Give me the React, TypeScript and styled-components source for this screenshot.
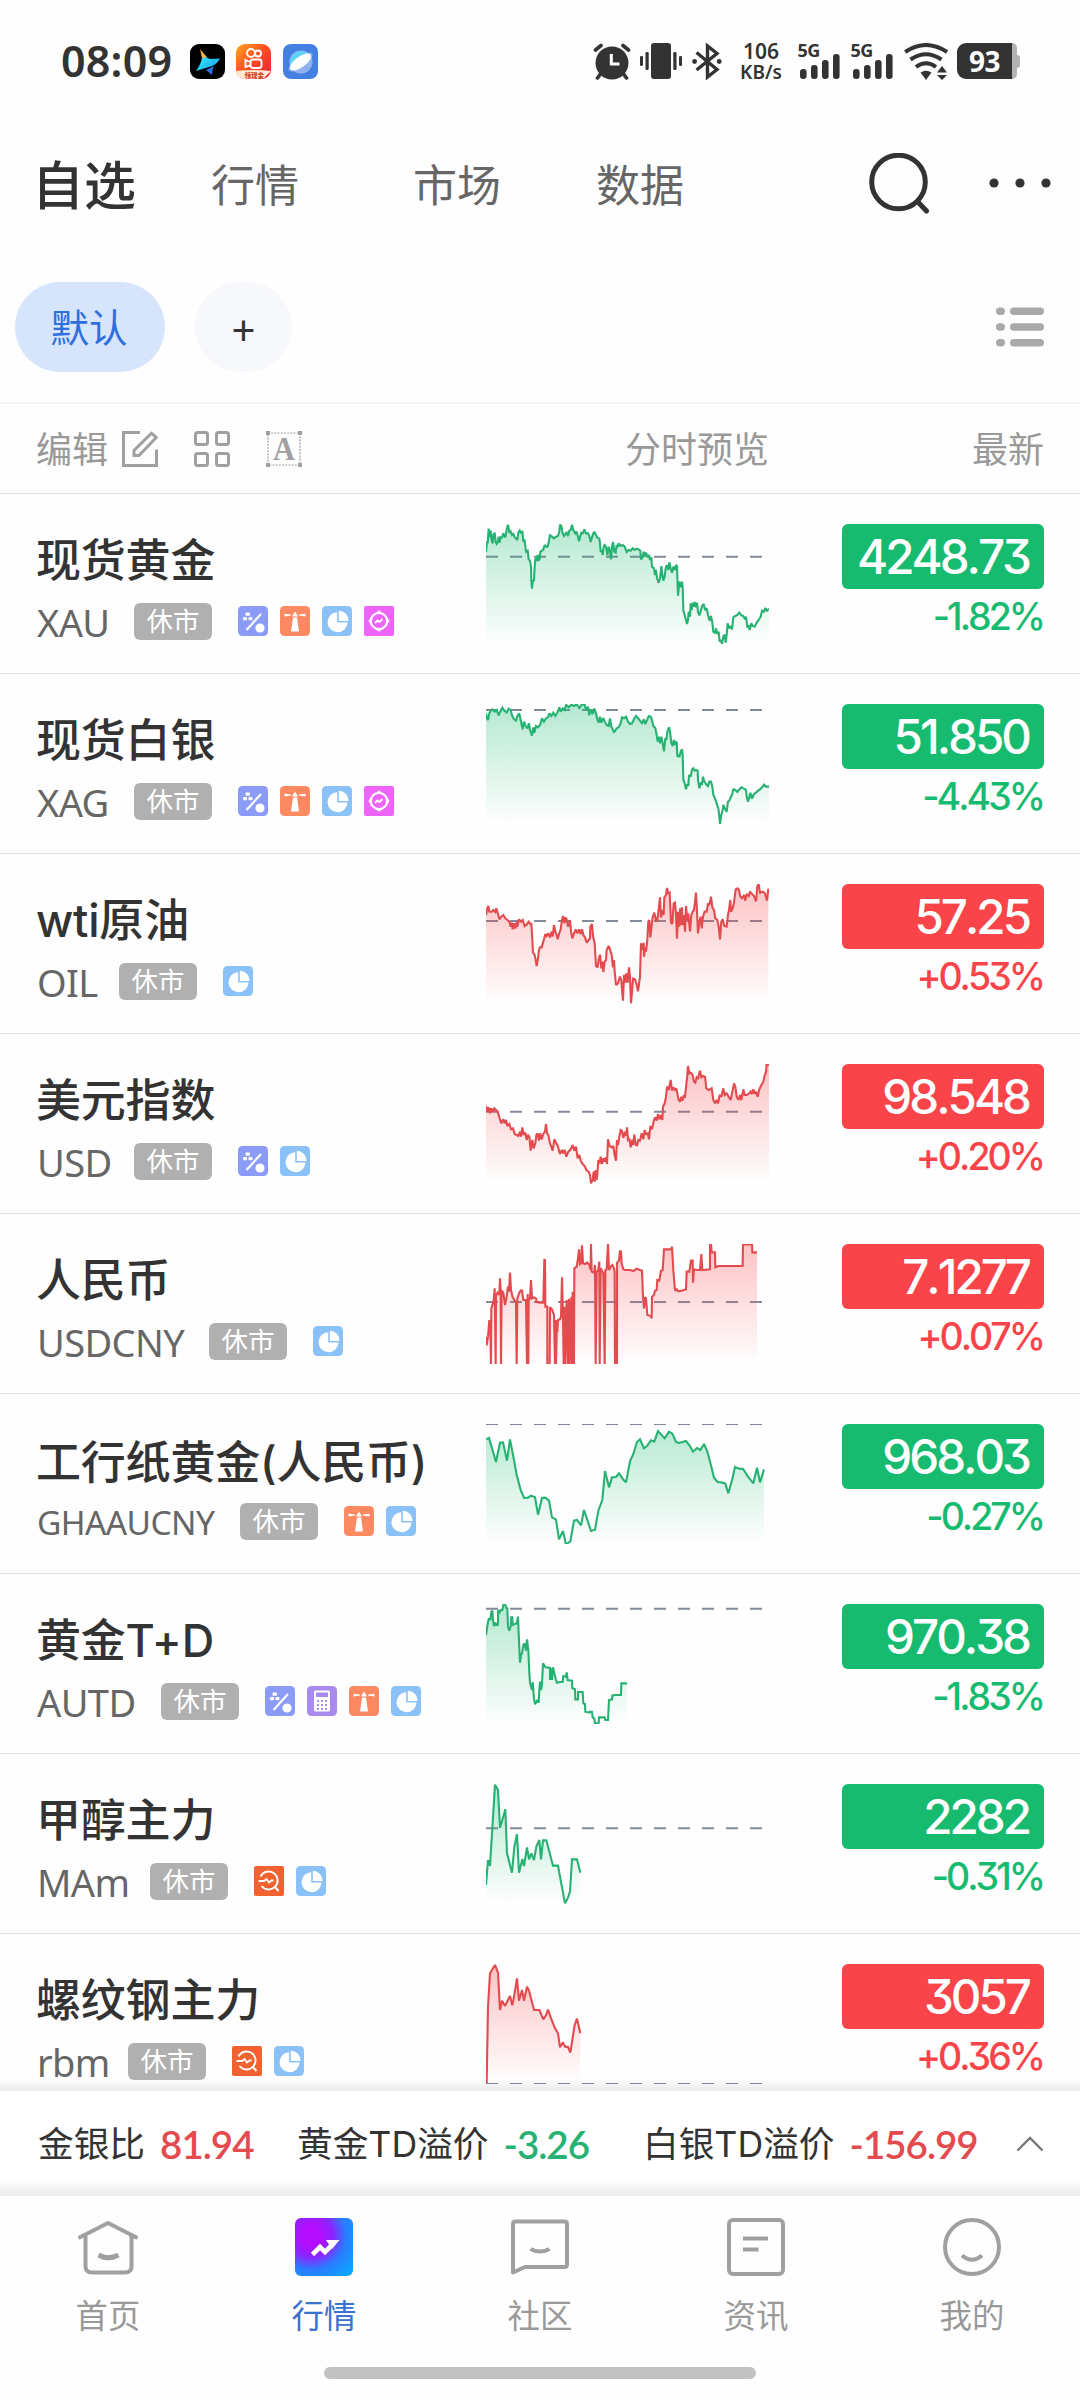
import React from 'react';
import styled, { createGlobalStyle } from 'styled-components';

const GREEN = '#17bb70';
const RED = '#f94449';
const INK = '#333333';
const MUTED = '#999999';

const cjk = `'Noto Sans', 'Noto Sans CJK SC', sans-serif`;
const numeric = `Inter, 'Noto Sans CJK SC', sans-serif`;

const GlobalStyle = createGlobalStyle`
  * { box-sizing: border-box; }
  body { margin: 0; background: #fefefe; }
  svg { display: block; flex: none; }
`;

const Screen = styled.div`
  width: 1080px;
  height: 2400px;
  display: flex;
  flex-direction: column;
  overflow: hidden;
  background: #fefefe;
  color: ${INK};
  font-family: ${cjk};
`;

/* ---------- status bar ---------- */

const StatusBar = styled.header`
  height: 122px;
  padding: 0 60px 0 61px;
  display: flex;
  align-items: center;
  justify-content: space-between;
`;

const StatusGroup = styled.div<{ $gap: number }>`
  display: flex;
  align-items: center;
  gap: ${p => p.$gap}px;
`;

const Clock = styled.span`
  width: 117px;
  font-size: 43px;
  font-weight: 600;
  line-height: 50px;
  letter-spacing: 0.2px;
`;

const NetSpeed = styled.div`
  width: 47px;
  margin: 0 3.5px 0 6.5px;
  display: flex;
  flex-direction: column;
  align-items: center;
  gap: 1px;
  font-weight: 600;
  font-size: 19px;
  line-height: 20px;
  & > span:first-child { font-size: 21px; letter-spacing: 0; }
`;

const Signal = styled.div`
  width: 42px;
  height: 36px;
  margin-right: 1.5px;
  display: grid;
  & > * { grid-area: 1 / 1; }
`;

const SignalLabel = styled.span`
  font-size: 18px;
  font-weight: 700;
  line-height: 14px;
  letter-spacing: -0.5px;
`;

const Battery = styled.div`
  width: 55px;
  height: 36px;
  display: flex;
  align-items: center;
  justify-content: center;
  border-radius: 9px 0 0 9px;
  background: ${INK};
  color: #fff;
  font-weight: 700;
  font-size: 28px;
  line-height: 36px;
  letter-spacing: -0.5px;
`;

const BatteryWrap = styled.div`
  margin-left: -1px;
  display: flex;
  align-items: center;
`;

const BatteryEdge = styled.span`
  width: 5px;
  height: 36px;
  border-radius: 0 7px 7px 0;
  background: #b3b3b3;
`;

const BatteryCap = styled.span`
  width: 3px;
  height: 13px;
  border-radius: 0 3px 3px 0;
  background: #b3b3b3;
`;

/* ---------- top navigation ---------- */

const TopNav = styled.nav`
  height: 126px;
  padding: 0 29px 0 32px;
  display: flex;
  align-items: center;
`;

const TopTab = styled.span<{ $active?: boolean; $width: number }>`
  width: ${p => p.$width}px;
  font-size: ${p => (p.$active ? 52 : 44)}px;
  font-weight: ${p => (p.$active ? 500 : 400)};
  color: ${p => (p.$active ? INK : '#666')};
  line-height: 60px;
`;

const TopActions = styled.div`
  margin: -4px 0 0 auto;
  display: flex;
  align-items: center;
  gap: 60px;
`;

const GroupBar = styled.div`
  height: 156px;
  padding: 34px 36px 0 15px;
  display: flex;
  align-items: flex-start;
  border-bottom: 2px solid #f3f4f6;
`;

const Pill = styled.button<{ $active?: boolean }>`
  width: ${p => (p.$active ? 150 : 97)}px;
  height: 90px;
  margin: 0 30px 0 0;
  padding: ${p => (p.$active ? '0 2px 0 0' : '6px 0 0')};
  border: 0;
  border-radius: 45px;
  background: ${p => (p.$active ? '#d6e4fc' : '#f7f8fb')};
  color: ${p => (p.$active ? '#2f6fdc' : INK)};
  font-family: ${cjk};
  font-size: ${p => (p.$active ? 38.5 : 42)}px;
  line-height: ${p => (p.$active ? 86 : 84)}px;
`;

const ListToggle = styled.div`
  margin: 25px 0 0 auto;
`;

/* ---------- table header ---------- */

const TableHead = styled.div`
  height: 90px;
  padding: 0 36px;
  display: grid;
  grid-template-columns: 450px 283px 1fr;
  align-items: center;
  border-bottom: 1px solid #e3e3e3;
  color: ${MUTED};
  font-size: 36px;
  line-height: 44px;
`;

const HeadTools = styled.div`
  display: flex;
  align-items: center;
  & > span { width: 86px; padding-top: 3px; }
  & > svg { margin-right: 36px; }
`;

const HeadCell = styled.span`
  padding-top: 3px;
  text-align: right;
`;

/* ---------- quote rows ---------- */

const QuoteList = styled.main`
  height: 1597px;
  flex: none;
  overflow: hidden;
  position: relative;
`;

const ListShade = styled.div`
  position: absolute;
  left: 0;
  right: 0;
  bottom: 0;
  height: 12px;
  background: linear-gradient(rgba(0, 0, 0, 0), rgba(0, 0, 0, 0.08));
`;

const Row = styled.section`
  height: 180px;
  padding: 30px 36px 0;
  display: grid;
  grid-template-columns: 450px 283px 1fr;
  align-items: start;
  border-bottom: 1px solid #e3e3e3;
`;

const Info = styled.div`
  display: flex;
  flex-direction: column;
  gap: 6px;
`;

const Name = styled.h2<{ $shift: number }>`
  margin: 0;
  padding-top: ${p => 5 + p.$shift}px;
  height: 71px;
  font-family: ${numeric};
  font-size: 45px;
  font-weight: 500;
  line-height: 64px;
  letter-spacing: -0.2px;
  white-space: nowrap;
`;

const Meta = styled.div`
  height: 40px;
  display: flex;
  align-items: center;
`;

const Code = styled.span<{ $width: number; $small?: boolean }>`
  width: ${p => p.$width}px;
  padding: 2px 0 0 1px;
  color: #666;
  font-size: ${p => (p.$small ? 33.5 : 38)}px;
  line-height: 40px;
  letter-spacing: -0.6px;
  white-space: nowrap;
`;

const Closed = styled.span`
  width: 78px;
  height: 37px;
  margin-right: 26px;
  border-radius: 6px;
  background: #b0b0b0;
  color: #fff;
  font-size: 26.5px;
  line-height: 36px;
  text-align: center;
`;

const Tags = styled.div`
  display: flex;
  gap: 12px;
`;

const Quote = styled.div`
  justify-self: end;
  width: 202px;
  display: flex;
  flex-direction: column;
  align-items: flex-end;
  font-family: ${numeric};
  font-kerning: none;
  font-feature-settings: 'cv09' 1, 'kern' 0, 'calt' 0;
`;

const Price = styled.strong<{ $color: string }>`
  width: 202px;
  height: 65px;
  padding-right: 15px;
  border-radius: 6px;
  background: ${p => p.$color};
  color: #fff;
  font-size: 47.5px;
  font-weight: 500;
  line-height: 65px;
  letter-spacing: -3px;
  text-align: right;
`;

const Change = styled.span<{ $color: string }>`
  margin: 5px 0 0;
  color: ${p => p.$color};
  font-size: 37.5px;
  font-weight: 500;
  line-height: 46px;
  letter-spacing: -3px;
  margin-right: 1px;
`;

/* ---------- summary strip ---------- */

const Summary = styled.div`
  height: 105px;
  flex: none;
  padding: 0 36px 0 38px;
  display: flex;
  align-items: center;
  background: linear-gradient(rgba(0, 0, 0, 0) 89px, rgba(0, 0, 0, 0.08) 105px), #fff;
  font-family: ${numeric};
  font-size: 35.7px;
  line-height: 50px;
  & > svg { margin-left: auto; }
`;

const SummaryItem = styled.span<{ $width: number }>`
  width: ${p => p.$width}px;
  display: flex;
  white-space: nowrap;
`;

const SummaryValue = styled.b<{ $color: string }>`
  margin-left: 15px;
  color: ${p => p.$color};
  font-family: Lato, sans-serif;
  font-size: 38.5px;
  font-weight: 600;
  letter-spacing: -1px;
`;

/* ---------- bottom navigation ---------- */

const BottomNav = styled.nav`
  height: 171px;
  flex: none;
  display: grid;
  grid-template-columns: repeat(5, 1fr);
  justify-items: center;
  padding-top: 20px;
`;

const NavItem = styled.div<{ $active?: boolean }>`
  display: flex;
  flex-direction: column;
  align-items: center;
  gap: 13px;
  color: ${p => (p.$active ? '#3a72d0' : MUTED)};
  font-size: 32.4px;
  line-height: 48px;
`;

const HomeIndicator = styled.div`
  width: 432px;
  height: 12px;
  margin: 0 auto;
  border-radius: 6px;
  background: #c1c1c1;
`;

/* ---------- status icons ---------- */

const AppPlay = () => (
  <svg width="35" height="35" viewBox="0 0 35 35">
    <defs>
      <linearGradient id="play" x1="0" y1="0" x2="1" y2="1">
        <stop offset="0" stopColor="#7ef0e0" />
        <stop offset="0.5" stopColor="#25cdf5" />
        <stop offset="1" stopColor="#1a9be8" />
      </linearGradient>
    </defs>
    <rect width="35" height="35" rx="9" fill="#000" />
    <path d="M11 6.500Q14 13 20 15L30 14.500Q26 22 19 23L6 27Q11 20 12 14Z" fill="url(#play)" />
    <path d="M10 5Q14 10 17 13L12 14Z" fill="#f6b23c" />
    <path d="M16 26L24 22Q22 26 22 31Z" fill="#2b6fe0" />
  </svg>
);

const AppVideo = () => (
  <svg width="35" height="35" viewBox="0 0 35 35">
    <defs>
      <linearGradient id="video" x1="0" y1="0" x2="1" y2="1">
        <stop offset="0" stopColor="#ffa51f" />
        <stop offset="0.5" stopColor="#ff4a22" />
        <stop offset="1" stopColor="#f01b3c" />
      </linearGradient>
      <clipPath id="videoClip"><rect width="35" height="35" rx="9" /></clipPath>
    </defs>
    <g clipPath="url(#videoClip)">
      <rect width="35" height="35" fill="url(#video)" />
      <path d="M0 27Q17 25 35 27L27 35H0Z" fill="#ffe9cf" />
      <g fill="none" stroke="#fff" strokeWidth="1.9">
        <circle cx="15" cy="9" r="4" />
        <circle cx="22" cy="9.500" r="3" />
        <rect x="14.500" y="15.500" width="11" height="8.500" rx="2.500" />
        <path d="M14 18L9.500 16V23L14 21.500" />
      </g>
      <text x="8.500" y="33.500" fontSize="6.500" fontWeight="900" fill="#d8402a" fontFamily="Noto Sans CJK SC">领现金</text>
    </g>
  </svg>
);

const AppPlanet = () => (
  <svg width="35" height="35" viewBox="0 0 35 35">
    <rect width="35" height="35" rx="8" fill="#4380e2" />
    <circle cx="18" cy="18" r="11.500" fill="#8fb2ee" />
    <path d="M7 21A11.500 11.500 0 0 1 27 11L8 24Z" fill="#5fd0f6" />
    <ellipse cx="17.500" cy="18" rx="14.500" ry="5" transform="rotate(-36 17.500 18)" fill="#a9c5f3" opacity="0.6" />
    <ellipse cx="17.500" cy="18" rx="12.500" ry="5.400" transform="rotate(-36 17.500 18)" fill="#fff" />
  </svg>
);

const AlarmIcon = () => (
  <svg width="38" height="37" viewBox="0 0 38 37">
    <g stroke={INK} strokeWidth="3.600" strokeLinecap="round" fill="none">
      <path d="M2.500 7L8 2.500M35.500 7L30 2.500M7.500 31L4.500 35M30.500 31L33.500 35" />
    </g>
    <circle cx="19" cy="20" r="16.500" fill={INK} />
    <path d="M18.300 11V21H26.500" stroke="#fff" strokeWidth="3" fill="none" />
  </svg>
);

const VibrateIcon = () => (
  <svg width="42" height="36" viewBox="0 0 42 36" fill={INK}>
    <rect x="11" y="0" width="20" height="36" rx="3" />
    <rect x="0" y="13" width="3" height="10" rx="1.200" />
    <rect x="5.500" y="9" width="3.200" height="18" rx="1.200" />
    <rect x="33.300" y="9" width="3.200" height="18" rx="1.200" />
    <rect x="39" y="13" width="3" height="10" rx="1.200" />
  </svg>
);

const BluetoothIcon = () => (
  <svg width="30" height="37" viewBox="0 0 30 37">
    <path d="M4.500 9.500L25 26.500L15.500 34V3L25 10.500L4.500 27" fill="none" stroke={INK} strokeWidth="3.400" />
    <circle cx="2.600" cy="18.500" r="2.400" fill={INK} />
    <circle cx="27.200" cy="18.500" r="2.400" fill={INK} />
  </svg>
);

const SignalBars = () => (
  <svg width="42" height="36" viewBox="0 0 42 36" fill={INK}>
    <rect x="2" y="26" width="6.600" height="10" rx="3" />
    <rect x="13" y="22" width="6.600" height="14" rx="3" />
    <rect x="24" y="17" width="6.600" height="19" rx="3" />
    <rect x="35" y="11" width="6.600" height="25" rx="3" />
  </svg>
);

const WifiIcon = () => (
  <svg width="45" height="37" viewBox="0 0 45 37">
    <g fill="none" stroke={INK} strokeWidth="4">
      <path d="M1.200 9Q22 -5 43 9" />
      <path d="M6.500 16.500Q22 6 37.500 16.500" />
      <path d="M12 24Q22 16.500 32 24" />
    </g>
    <path d="M16.500 29.500Q22 26 27.500 29.500L22 37Z" fill={INK} />
    <path d="M33 29.500L38 23L43 29.500ZM33 32L38 37L43 32Z" fill={INK} />
  </svg>
);

/* ---------- toolbar icons ---------- */

const SearchIcon = () => (
  <svg width="60" height="61" viewBox="0 0 60 61" fill="none" stroke={INK}>
    <circle cx="29.500" cy="29" r="26.800" strokeWidth="5" />
    <path d="M48.500 48.500L57.500 58" strokeWidth="5" strokeLinecap="round" />
  </svg>
);

const MoreIcon = () => (
  <svg width="62" height="12" viewBox="0 0 62 12" fill={INK}>
    <circle cx="5" cy="6" r="4.600" />
    <circle cx="31" cy="6" r="4.600" />
    <circle cx="57" cy="6" r="4.600" />
  </svg>
);

const ListIcon = () => (
  <svg width="48" height="40" viewBox="0 0 48 40" fill="#a9a9a9">
    {[0.5, 16.2, 32].map(y => (
      <React.Fragment key={y}>
        <rect x="0" y={y} width="9" height="7.500" rx="3.700" />
        <rect x="14" y={y} width="34" height="7.500" rx="3.700" />
      </React.Fragment>
    ))}
  </svg>
);

const EditIcon = () => (
  <svg width="36" height="36" viewBox="0 0 36 36" fill="none" stroke="#a0a0a0" strokeWidth="3">
    <path d="M18 1.500H1.500V34.500H34.500V18.500" />
    <path d="M12 24.500V19.500L29.500 2.200L34.200 6.500L17 24.500Z" />
  </svg>
);

const GridIcon = () => (
  <svg width="36" height="36" viewBox="0 0 36 36" fill="none" stroke="#a0a0a0" strokeWidth="3">
    <rect x="1.500" y="1.500" width="12" height="12" rx="2" />
    <rect x="22.500" y="1.500" width="12" height="12" rx="2" />
    <rect x="1.500" y="22.500" width="12" height="12" rx="2" />
    <rect x="22.500" y="22.500" width="12" height="12" rx="2" />
  </svg>
);

const FontSizeIcon = () => (
  <svg width="36" height="36" viewBox="0 0 36 36">
    <rect x="2" y="2" width="32" height="32" fill="none" stroke="#a0a0a0" strokeWidth="1.200" strokeDasharray="2 1.200" />
    <path d="M0 0H4V4H0ZM32 0H36V4H32ZM0 32H4V36H0ZM32 32H36V36H32Z" fill="#a0a0a0" />
    <text x="18" y="29" textAnchor="middle" fontFamily="Liberation Serif, serif" fontWeight="700" fontSize="34" fill="#a0a0a0" textLength="22" lengthAdjust="spacingAndGlyphs">A</text>
  </svg>
);

const ChevronUp = () => (
  <svg width="28" height="17" viewBox="0 0 28 17">
    <path d="M1.500 15.500L14 3L26.500 15.500" fill="none" stroke="#777" strokeWidth="2.400" />
  </svg>
);

/* ---------- row tags ---------- */

type TagKind = 'ratio' | 'tower' | 'pie' | 'target' | 'calc' | 'scan';

const tagColors: Record<TagKind, string> = {
  ratio: '#8a9cf8',
  tower: '#fb8a63',
  pie: '#8ac2f8',
  target: '#ee63f8',
  calc: '#a98bf0',
  scan: '#f0622f',
};

const tagShapes: Record<TagKind, React.ReactNode> = {
  ratio: (
    <g fill="#fff">
      <path d="M8.500 24L23 8" stroke="#fff" strokeWidth="2.200" />
      <circle cx="22" cy="22" r="4.600" />
      <rect x="7.500" y="6.500" width="4.500" height="3.200" rx="1" />
      <rect x="5" y="11" width="4" height="3.200" rx="1" />
      <rect x="10.500" y="11" width="4" height="3.200" rx="1" />
    </g>
  ),
  tower: (
    <g fill="#fff">
      <path d="M13 11.500H17L19 25.500H11Z" />
      <path d="M12 10.500L15 5.500L18 10.500Z" />
      <path d="M4.500 7.800L11 8.600V9.600L4.500 10.400ZM25.500 7.800L19 8.600V9.600L25.500 10.400Z" />
    </g>
  ),
  pie: (
    <g fill="#fff">
      <path d="M15.200 6.200A10 10 0 1 0 25.500 16.500H15.200Z" />
      <path d="M16.800 4.800A9.800 9.800 0 0 1 26.500 15H16.800Z" />
    </g>
  ),
  target: (
    <g fill="none" stroke="#fff" strokeWidth="2.200">
      <circle cx="15" cy="15" r="8.200" />
      <path d="M15 4.800V8M15 22V25.200M4.800 15H8M22 15H25.200" strokeWidth="3" />
      <path d="M11 17L13.500 14.500L15.500 16L18.500 13" strokeWidth="1.800" />
    </g>
  ),
  calc: (
    <g>
      <rect x="7" y="4.500" width="16" height="21" rx="1.500" fill="#fff" />
      <rect x="9" y="6.500" width="12" height="4.500" fill="#a98bf0" />
      {[14, 18, 22].map(y => [10, 14, 18].map(x => (
        <rect key={`${x}-${y}`} x={x} y={y} width="2" height="2" fill="#a98bf0" />
      )))}
    </g>
  ),
  scan: (
    <g fill="none" stroke="#fff" strokeWidth="1.900">
      <path d="M6.500 10.500A9 9 0 1 1 7.500 20" />
      <path d="M21 21L24.500 25" />
      <path d="M4.500 15H10L12.500 13L15 16.500L17.500 14.500H19.500" />
    </g>
  ),
};

const TagIcon = ({ kind }: { kind: TagKind }) => (
  <svg width="30" height="30" viewBox="0 0 30 30">
    <rect width="30" height="30" rx={kind === 'target' || kind === 'scan' ? 2 : 4.5} fill={tagColors[kind]} />
    {tagShapes[kind]}
  </svg>
);

/* ---------- sparklines: three units to a pixel, 849 x 360 from (78, 72) ---------- */

const Sparkline = ({ id, points, base, color }: { id: string; points: string; base: number; color: string }) => {
  const list = points.trim().split(/\s+/);
  const firstX = list[0].split(',')[0];
  const lastX = list[list.length - 1].split(',')[0];
  const stroke = color === RED ? '#e34b4e' : '#27b273';
  return (
    <svg width="283" height="120" viewBox="78 72 849 360">
      <defs>
        <linearGradient id={`fill-${id}`} gradientUnits="userSpaceOnUse" x1="0" y1="72" x2="0" y2="432">
          <stop offset="0" stopColor={color} stopOpacity="0.32" />
          <stop offset="1" stopColor={color} stopOpacity="0" />
        </linearGradient>
      </defs>
      <path d={`M78 ${base}H912`} stroke="#838a9b" strokeWidth="6" strokeDasharray="36 36" />
      <polygon points={`${firstX},432 ${points} ${lastX},432`} fill={`url(#fill-${id})`} />
      <polyline points={points} fill="none" stroke={stroke} strokeWidth="6.300" strokeLinejoin="miter" strokeMiterlimit="2" />
    </svg>
  );
};

interface Instrument {
  name: string;
  code: string;
  codeWidth: number;
  small?: boolean;
  tags: TagKind[];
  price: string;
  change: string;
  up: boolean;
  base: number;
  points: string;
}

const instruments: Instrument[] = [
  {
    name: '现货黄金', code: 'XAU', codeWidth: 98, tags: ['ratio', 'tower', 'pie', 'target'],
    price: '4248.73', change: '-1.82%', up: false, base: 170,
    points: `78,155 81,125 83,130 86,86 89,112 92,92 95,120 98,130 100,105 104,98 107,125 110,132 113,128 116,110 119,128 122,112 126,112 130,100 133,108 136,112 140,90 144,74 148,98 152,94 156,105 160,102 164,112 168,115 172,120 175,98 179,92 183,100 187,93 190,125 194,122 198,155 203,152 206,178 210,182 213,200 214,240 216,266 218,245 222,240 224,200 226,178 230,180 233,165 236,180 239,178 241,155 246,152 250,148 254,135 258,140 263,140 267,122 270,106 276,110 282,115 288,110 294,108 298,95 300,74 304,78 308,100 312,108 316,102 320,98 324,108 328,92 332,90 336,74 340,90 346,100 350,95 354,110 357,124 360,112 364,98 368,100 373,88 378,100 384,100 388,108 392,126 396,112 400,100 403,95 408,105 412,113 418,116 420,130 422,156 426,150 428,165 431,140 434,135 438,140 442,165 446,140 450,155 453,178 456,140 459,126 463,155 467,158 470,135 473,142 476,130 482,138 488,135 494,140 500,156 506,150 512,152 518,145 524,150 530,146 536,148 541,152 543,178 548,172 551,155 554,170 558,158 563,172 567,165 570,180 574,172 576,200 582,205 585,225 588,210 591,235 596,248 600,235 604,198 607,225 610,242 614,230 617,205 621,195 625,210 628,187 632,205 636,218 640,200 644,210 648,195 651,198 654,287 658,245 662,262 666,245 668,262 670,330 674,345 678,360 681,372 684,360 686,335 690,350 692,310 695,330 698,308 702,320 704,306 708,322 711,308 714,335 718,346 722,335 726,318 731,312 735,330 740,325 744,345 749,362 753,348 757,368 760,395 765,400 768,385 772,402 776,395 779,425 783,420 786,432 790,410 794,404 797,428 800,405 803,370 807,385 812,378 816,388 820,352 826,348 832,345 838,338 844,346 850,348 855,358 858,350 862,380 866,378 869,390 874,370 878,378 884,380 890,368 896,360 902,350 906,332 912,335 916,324 921,332 927,326`,
  },
  {
    name: '现货白银', code: 'XAG', codeWidth: 98, tags: ['ratio', 'tower', 'pie', 'target'],
    price: '51.850', change: '-4.43%', up: false, base: 90,
    points: `78,100 81,115 84,120 88,100 92,92 97,88 104,95 110,90 116,106 120,96 127,83 133,92 140,98 146,86 152,90 156,106 162,118 168,122 172,108 178,100 182,120 188,148 192,125 197,138 202,145 207,130 210,150 216,167 220,142 223,158 228,138 234,142 240,135 246,115 252,125 258,115 264,112 268,100 274,108 280,98 286,108 292,98 298,82 302,95 308,85 314,90 318,74 326,82 334,74 342,78 350,73 358,84 366,73 374,74 378,90 384,80 388,106 392,88 398,102 403,86 408,100 412,118 416,128 420,110 424,128 430,114 434,125 440,135 446,138 450,115 454,140 458,148 462,156 466,152 470,145 476,142 482,130 486,112 492,115 498,110 504,125 510,132 516,130 522,118 528,108 534,114 540,122 546,130 552,118 556,132 562,118 566,108 572,110 576,120 580,138 586,144 590,165 593,185 596,170 600,190 604,170 608,190 612,214 616,175 619,180 622,155 627,142 630,155 634,188 638,198 642,180 646,195 650,185 652,230 656,225 658,232 662,215 666,208 668,225 670,300 674,310 678,328 682,312 685,318 687,285 692,290 696,270 700,265 704,272 708,270 713,272 714,300 718,325 722,310 726,312 729,290 733,305 738,312 744,318 748,305 753,305 757,320 760,345 765,355 770,370 775,385 777,400 780,432 784,405 788,390 790,375 796,388 800,395 804,365 808,362 813,350 817,342 820,328 826,330 832,336 838,328 845,322 852,326 858,330 860,350 864,365 868,350 871,338 876,356 882,342 888,338 894,332 900,328 906,322 912,314 918,320 927,320`,
  },
  {
    name: 'wti原油', code: 'OIL', codeWidth: 83, tags: ['pie'],
    price: '57.25', change: '+0.53%', up: true, base: 183,
    points: `78,165 82,145 85,138 88,155 94,156 100,150 106,156 109,145 114,162 118,178 124,170 130,165 136,175 142,180 148,185 152,200 156,188 158,208 162,190 166,206 170,185 172,200 177,178 183,185 188,180 194,198 200,194 206,185 211,192 214,190 217,240 219,278 224,285 228,305 230,318 234,295 237,270 240,262 245,262 250,245 256,222 260,228 265,220 270,232 275,215 278,230 282,195 286,215 290,225 293,238 297,222 302,208 306,180 309,168 313,190 316,172 320,178 324,200 328,190 330,180 333,215 337,235 342,220 347,208 352,220 357,208 362,222 366,208 370,225 375,232 380,248 386,240 390,235 391,200 396,192 399,228 404,250 408,318 413,322 416,298 420,284 424,325 427,305 430,336 434,305 438,300 440,270 446,258 450,268 455,285 459,322 462,300 464,335 468,375 474,370 480,350 484,362 489,422 492,345 496,368 499,340 503,368 507,322 510,350 513,430 517,385 519,356 525,358 530,375 534,394 537,372 540,350 543,250 548,270 551,248 552,290 556,262 558,275 562,240 565,185 568,180 571,232 574,205 578,172 583,158 588,182 592,180 596,150 600,112 603,172 608,150 611,165 613,112 618,105 621,84 625,100 629,98 633,188 637,192 641,130 645,128 648,160 651,236 654,155 658,200 660,145 663,195 666,142 668,196 672,165 675,215 678,138 682,180 685,160 687,185 690,214 694,165 698,155 702,150 705,125 708,98 711,155 714,220 718,185 722,170 725,205 729,170 734,155 740,155 744,130 748,135 753,110 757,142 762,150 766,175 772,180 776,200 780,238 784,185 788,178 793,198 800,200 804,165 807,150 811,120 813,155 818,145 822,128 827,88 833,85 837,90 840,108 846,115 852,105 856,122 860,102 866,108 870,95 876,102 882,108 888,124 892,78 896,72 900,98 908,95 915,100 921,122 925,86`,
  },
  {
    name: '美元指数', code: 'USD', codeWidth: 98, tags: ['ratio', 'pie'],
    price: '98.548', change: '+0.20%', up: true, base: 215,
    points: `78,198 82,215 86,202 90,220 94,205 98,216 103,205 108,210 113,215 118,232 124,250 130,238 134,250 138,240 142,258 148,252 153,268 159,265 164,282 170,285 175,288 180,275 183,290 187,262 191,285 196,278 200,300 204,285 208,290 212,332 217,300 221,325 226,310 229,285 233,280 237,302 241,280 245,298 250,282 255,275 258,252 261,280 265,285 270,310 274,320 278,332 283,298 288,308 294,320 300,342 306,330 310,340 314,330 319,350 325,335 332,328 338,315 343,332 348,320 353,355 358,345 362,362 368,372 374,378 379,390 386,395 390,405 393,430 398,420 401,395 404,425 407,390 410,420 413,390 415,360 419,370 422,350 426,372 430,355 434,365 438,352 441,372 444,298 449,318 455,322 460,318 464,345 468,362 471,300 474,315 478,290 482,270 486,272 490,294 495,275 498,288 501,262 504,300 508,298 512,322 516,300 519,315 523,284 527,315 531,316 535,300 540,302 545,280 550,298 554,270 558,282 563,280 567,298 571,258 576,268 582,240 586,232 590,242 594,222 598,238 603,225 607,240 609,200 614,190 618,170 621,140 626,150 632,120 636,152 640,142 645,150 649,145 652,160 656,180 660,185 664,170 667,182 671,168 675,170 678,142 681,115 684,78 688,100 692,98 697,102 702,125 706,128 710,112 714,115 720,92 724,112 729,108 735,110 739,145 745,150 750,148 755,145 760,180 765,190 770,180 774,190 779,165 784,170 790,145 794,165 800,160 806,170 812,180 816,160 822,130 826,140 830,170 836,180 840,165 844,180 850,148 854,165 860,165 866,162 872,155 876,162 880,148 884,162 888,155 893,170 898,148 904,135 910,125 913,110 918,95 920,72 927,75`,
  },
  {
    name: '人民币', code: 'USDCNY', codeWidth: 173, tags: ['pie'],
    price: '7.1277', change: '+0.07%', up: true, base: 246,
    points: `78,350 80,376 84,350 88,300 91,330 93,432 94,265 100,245 102,232 104,205 107,432 108,228 114,215 118,225 120,175 122,210 123,432 125,212 130,218 135,255 140,230 144,200 147,215 150,158 153,210 158,232 163,240 168,248 170,432 172,235 178,218 182,212 186,212 190,240 198,240 201,432 203,222 205,432 206,240 210,235 213,180 216,235 222,232 228,235 230,246 240,248 250,248 253,120 255,120 256,260 262,260 262,432 269,432 270,262 276,268 282,285 285,432 288,300 288,432 291,300 292,335 294,300 300,298 303,290 306,172 309,290 311,432 314,260 316,432 320,240 324,432 327,236 329,432 334,230 336,432 338,215 340,432 342,432 343,145 350,140 354,115 357,88 360,132 363,130 366,76 369,130 375,132 382,128 388,135 392,150 393,72 395,155 402,158 405,135 407,432 410,155 415,150 418,125 419,432 422,145 430,160 434,432 436,150 440,148 444,72 447,150 452,140 457,135 462,145 464,155 465,432 471,432 471,128 477,122 480,92 483,95 485,130 490,148 495,150 510,150 520,153 530,146 545,152 546,152 549,228 552,265 555,232 558,235 562,285 572,288 575,295 576,230 582,225 585,212 590,210 592,180 598,182 603,152 608,150 612,88 634,88 636,80 640,150 645,212 650,208 655,214 665,212 678,208 680,155 688,155 693,122 698,122 699,188 702,148 710,150 720,150 724,102 727,150 750,148 750,72 753,72 755,97 765,97 766,142 775,138 848,138 849,73 876,73 877,97 891,97`,
  },
  {
    name: '工行纸黄金(人民币)', code: 'GHAAUCNY', codeWidth: 204, small: true, tags: ['tower', 'pie'],
    price: '968.03', change: '-0.27%', up: false, base: 72,
    points: `78,118 87,114 108,186 120,128 129,127 141,182 150,118 162,180 170,225 182,270 192,294 204,293 213,287 225,292 234,344 246,294 256,293 267,302 276,352 288,359 297,418 309,393 317,430 324,429 331,424 342,362 351,360 363,376 372,330 393,393 405,389 415,332 427,300 435,213 447,262 456,232 468,231 477,220 489,238 498,247 510,184 520,162 531,126 540,118 552,145 561,138 573,121 583,125 594,93 614,115 627,95 637,101 648,126 657,129 678,123 690,138 699,155 711,144 721,150 732,132 742,154 754,200 762,233 773,246 784,247 796,251 805,280 817,237 825,201 837,206 849,207 864,230 880,250 891,203 900,247 912,208`,
  },
  {
    name: '黄金T+D', code: 'AUTD', codeWidth: 125, tags: ['ratio', 'calc', 'tower', 'pie'],
    price: '970.38', change: '-1.83%', up: false, base: 86,
    points: `78,165 84,125 87,115 91,120 94,95 97,92 99,120 102,138 106,128 109,135 114,134 114,90 118,100 122,90 127,90 130,75 136,74 139,84 142,85 144,140 148,152 152,138 154,112 157,112 158,135 170,130 174,110 176,160 180,248 183,225 186,220 190,195 194,190 198,212 201,178 205,210 208,280 210,308 216,330 218,306 222,355 225,372 228,368 232,360 236,368 238,330 240,305 243,330 246,312 249,250 257,262 270,264 270,300 273,265 276,300 279,262 282,275 288,300 291,308 300,306 308,306 310,288 318,290 320,277 323,300 336,302 337,325 345,328 346,358 354,358 354,336 368,336 370,370 375,372 376,395 388,398 390,395 396,396 398,412 403,416 405,430 416,430 417,412 434,412 436,420 444,420 447,360 456,358 457,347 465,345 483,345 484,310 501,310`,
  },
  {
    name: '甲醇主力', code: 'MAm', codeWidth: 114, tags: ['scan', 'pie'],
    price: '2282', change: '-0.31%', up: false, base: 205,
    points: `78,375 84,300 90,318 105,74 114,90 120,203 127,180 136,148 141,280 150,315 156,338 163,260 171,223 177,338 187,297 192,318 201,262 207,298 214,280 222,300 229,260 238,240 243,298 249,241 259,241 279,317 294,317 300,350 315,430 324,413 330,395 336,298 351,298 361,338`,
  },
  {
    name: '螺纹钢主力', code: 'rbm', codeWidth: 92, tags: ['scan', 'pie'],
    price: '3057', change: '+0.36%', up: true, base: 432,
    points: `80,430 84,200 90,100 105,75 114,98 120,210 126,182 135,198 150,168 157,196 163,165 171,115 177,182 186,150 192,182 201,140 207,152 222,210 238,210 250,238 258,226 264,209 272,232 285,265 294,280 300,322 309,307 315,320 324,321 331,338 337,300 344,255 351,236 361,280`,
  },
];

/* ---------- bottom navigation icons ---------- */

const NavIcon = ({ children }: { children: React.ReactNode }) => (
  <svg width="62" height="62" viewBox="0 0 62 62" fill="none" stroke="#a0a0a0" strokeWidth="4">{children}</svg>
);

const HomeIcon = () => (
  <NavIcon>
    <path d="M1.500 22L31 7L60.500 22" strokeLinejoin="round" />
    <path d="M8.500 20V50Q8.500 56.500 15 56.500H48Q54.500 56.500 54.500 50V20" />
    <path d="M21.500 39Q31 44.500 41.500 39" strokeWidth="5" />
  </NavIcon>
);

const MarketIcon = () => (
  <NavIcon>
    <defs>
      <radialGradient id="market" cx="0.28" cy="0.3" r="0.95">
        <stop offset="0.18" stopColor="#b30cff" />
        <stop offset="0.4" stopColor="#8a26ff" />
        <stop offset="0.62" stopColor="#2a7bff" />
        <stop offset="1" stopColor="#08aaff" />
      </radialGradient>
    </defs>
    <rect x="2" y="2" width="58" height="58" rx="6" fill="url(#market)" stroke="none" />
    <path d="M19.500 38.500L27 31L32 36L41 27" stroke="#fff" strokeWidth="4.600" />
    <path d="M33 24H46.500L39 33Z" fill="#fff" stroke="none" />
  </NavIcon>
);

const CommunityIcon = () => (
  <NavIcon>
    <path d="M4 8Q4 5.500 6.500 5.500H55.500Q58 5.500 58 8V48.500Q58 51 55.500 51H16L4 56.500Z" strokeLinejoin="round" />
    <path d="M21.500 33Q31 38 40.500 33" />
  </NavIcon>
);

const NewsIcon = () => (
  <NavIcon>
    <rect x="4" y="4" width="54" height="54" rx="4" />
    <path d="M18 22.500H43M18 33.500H33.500" />
  </NavIcon>
);

const MeIcon = () => (
  <NavIcon>
    <circle cx="31" cy="31" r="27" />
    <path d="M21 39.500Q31 48 41 39.500" />
  </NavIcon>
);

const navItems = [
  { label: '首页', Icon: HomeIcon },
  { label: '行情', Icon: MarketIcon, active: true },
  { label: '社区', Icon: CommunityIcon },
  { label: '资讯', Icon: NewsIcon },
  { label: '我的', Icon: MeIcon },
];

export default function App() {
  return (
    <Screen>
      <GlobalStyle />
      <StatusBar>
        <StatusGroup $gap={11.5}>
          <Clock>08:09</Clock>
          <AppPlay />
          <AppVideo />
          <AppPlanet />
        </StatusGroup>
        <StatusGroup $gap={9.5}>
          <AlarmIcon />
          <VibrateIcon />
          <BluetoothIcon />
          <NetSpeed><span>106</span><span>KB/s</span></NetSpeed>
          <Signal><SignalLabel>5G</SignalLabel><SignalBars /></Signal>
          <Signal><SignalLabel>5G</SignalLabel><SignalBars /></Signal>
          <WifiIcon />
          <BatteryWrap><Battery>93</Battery><BatteryEdge /><BatteryCap /></BatteryWrap>
        </StatusGroup>
      </StatusBar>

      <TopNav>
        <TopTab $active $width={179}>自选</TopTab>
        <TopTab $width={202}>行情</TopTab>
        <TopTab $width={183}>市场</TopTab>
        <TopTab $width={100}>数据</TopTab>
        <TopActions>
          <SearchIcon />
          <MoreIcon />
        </TopActions>
      </TopNav>

      <GroupBar>
        <Pill $active>默认</Pill>
        <Pill>+</Pill>
        <ListToggle><ListIcon /></ListToggle>
      </GroupBar>

      <TableHead>
        <HeadTools>
          <span>编辑</span>
          <EditIcon />
          <GridIcon />
          <FontSizeIcon />
        </HeadTools>
        <HeadCell>分时预览</HeadCell>
        <HeadCell>最新</HeadCell>
      </TableHead>

      <QuoteList>
        {instruments.map(item => {
          const color = item.up ? RED : GREEN;
          return (
            <Row key={item.code}>
              <Info>
                <Name $shift={item.small ? 2 : 0}>{item.name}</Name>
                <Meta>
                  <Code $width={item.codeWidth} $small={item.small}>{item.code}</Code>
                  <Closed>休市</Closed>
                  <Tags>{item.tags.map(kind => <TagIcon key={kind} kind={kind} />)}</Tags>
                </Meta>
              </Info>
              <Sparkline id={item.code} points={item.points} base={item.base} color={color} />
              <Quote>
                <Price $color={color}>{item.price}</Price>
                <Change $color={color}>{item.change}</Change>
              </Quote>
            </Row>
          );
        })}
        <ListShade />
      </QuoteList>

      <Summary>
        <SummaryItem $width={259}>金银比<SummaryValue $color="#e34b4e">81.94</SummaryValue></SummaryItem>
        <SummaryItem $width={346}>黄金TD溢价<SummaryValue $color="#27b273">-3.26</SummaryValue></SummaryItem>
        <SummaryItem $width={340}>白银TD溢价<SummaryValue $color="#e34b4e">-156.99</SummaryValue></SummaryItem>
        <ChevronUp />
      </Summary>

      <BottomNav>
        {navItems.map(({ label, Icon, active }) => (
          <NavItem key={label} $active={active}>
            <Icon />
            <span>{label}</span>
          </NavItem>
        ))}
      </BottomNav>
      <HomeIndicator />
    </Screen>
  );
}
